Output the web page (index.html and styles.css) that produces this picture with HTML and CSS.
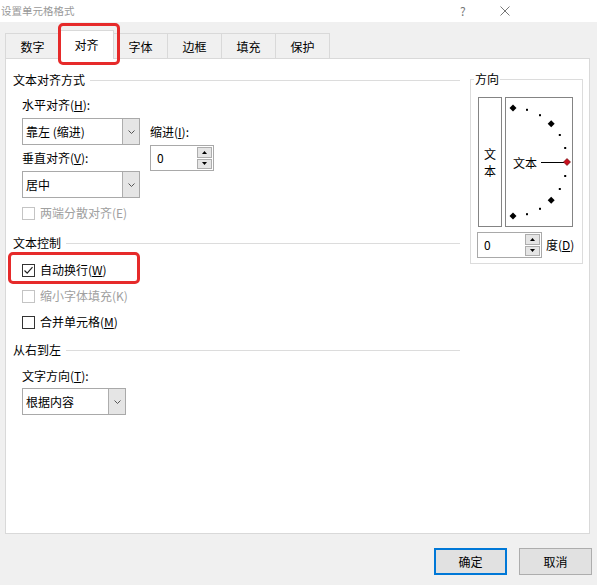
FILE: index.html
```html
<!DOCTYPE html>
<html lang="zh-CN">
<head>
<meta charset="utf-8">
<title>设置单元格格式</title>
<link rel="stylesheet" href="styles.css">
</head>
<body>
<div class="dialog">
  <div class="titlebar">
    <span class="title">设置单元格格式</span>
    <span class="help">?</span>
    <svg class="close" width="10" height="10" viewBox="0 0 10 10"><path d="M0.5 0.5L9.5 9.5M9.5 0.5L0.5 9.5" stroke="#777" stroke-width="1" fill="none"/></svg>
  </div>

  <div class="tabs">
    <div class="tab">数字</div>
    <div class="tab active">对齐</div>
    <div class="tab">字体</div>
    <div class="tab">边框</div>
    <div class="tab">填充</div>
    <div class="tab">保护</div>
  </div>

  <div class="panel">
    <div class="left">
      <div class="sec">文本对齐方式</div>
      <div class="align-grid">
        <div class="lbl-h">水平对齐(<u>H</u>):</div>
        <div class="combo combo-h"><span class="val">靠左 (缩进)</span><span class="arrow"><svg width="7" height="4" viewBox="0 0 7 4"><path d="M0.5 0.5L3.5 3.5L6.5 0.5" stroke="#555" fill="none"/></svg></span></div>
        <div class="lbl-indent">缩进(<u>I</u>):</div>
        <div class="lbl-v">垂直对齐(<u>V</u>):</div>
        <div class="spin spin-indent"><span class="val">0</span><span class="btns"><span><svg width="5" height="3" viewBox="0 0 5 3"><path d="M2.5 0L5 3H0Z" fill="#000"/></svg></span><span><svg width="5" height="3" viewBox="0 0 5 3"><path d="M0 0H5L2.5 3Z" fill="#000"/></svg></span></span></div>
        <div class="combo combo-v"><span class="val">居中</span><span class="arrow"><svg width="7" height="4" viewBox="0 0 7 4"><path d="M0.5 0.5L3.5 3.5L6.5 0.5" stroke="#555" fill="none"/></svg></span></div>
        <div class="chk disabled chk-dist"><span class="box"></span><span>两端分散对齐(E)</span></div>
      </div>

      <div class="sec sec-ctrl">文本控制</div>
      <div class="checks">
        <div class="chk"><span class="box"><svg width="11" height="11" viewBox="0 0 11 11"><path d="M1.5 5.5L4.2 8.2L9.5 2.2" stroke="#222" stroke-width="1.2" fill="none"/></svg></span><span>自动换行(<u>W</u>)</span></div>
        <div class="chk disabled"><span class="box"></span><span>缩小字体填充(K)</span></div>
        <div class="chk"><span class="box"></span><span>合并单元格(<u>M</u>)</span></div>
      </div>

      <div class="sec sec-rtl">从右到左</div>
      <div class="lbl-t">文字方向(<u>T</u>):</div>
      <div class="combo combo-t"><span class="val">根据内容</span><span class="arrow"><svg width="7" height="4" viewBox="0 0 7 4"><path d="M0.5 0.5L3.5 3.5L6.5 0.5" stroke="#555" fill="none"/></svg></span></div>
    </div>

    <div class="group">
      <span class="legend">方向</span>
      <div class="orient">
        <div class="vbox"><span>文</span><span>本</span></div>
        <div class="dial">
          <svg width="66" height="128" viewBox="0 0 66 128">
            <g fill="#000">
              <rect x="20" y="10.8" width="2" height="2"/>
              <rect x="33" y="16.2" width="2" height="2"/>
              <rect x="52.8" y="36" width="2" height="2"/>
              <rect x="58.2" y="49" width="2" height="2"/>
              <rect x="58.2" y="77" width="2" height="2"/>
              <rect x="52.8" y="90" width="2" height="2"/>
              <rect x="33" y="109.8" width="2" height="2"/>
              <rect x="20" y="115.2" width="2" height="2"/>
              <polygon points="7,6.5 10.5,10 7,13.5 3.5,10"/>
              <polygon points="45.2,22.3 48.7,25.8 45.2,29.3 41.7,25.8"/>
              <polygon points="45.2,98.7 48.7,102.2 45.2,105.7 41.7,102.2"/>
              <polygon points="7,114.5 10.5,118 7,121.5 3.5,118"/>
            </g>
            <text x="7" y="64" dominant-baseline="central" class="dial-text">文本</text>
            <line x1="35" y1="64.5" x2="58" y2="64.5" stroke="#000" stroke-width="1"/>
            <polygon points="61,60.5 64.5,64 61,67.5 57.5,64" fill="#c8101e" stroke="#5a0000" stroke-width="0.6"/>
          </svg>
        </div>
      </div>
      <div class="deg">
        <div class="spin spin-deg"><span class="val">0</span><span class="btns"><span><svg width="5" height="3" viewBox="0 0 5 3"><path d="M2.5 0L5 3H0Z" fill="#000"/></svg></span><span><svg width="5" height="3" viewBox="0 0 5 3"><path d="M0 0H5L2.5 3Z" fill="#000"/></svg></span></span></div>
        <span class="unit">度(<u>D</u>)</span>
      </div>
    </div>
  </div>

  <div class="buttons">
    <div class="btn default">确定</div>
    <div class="btn">取消</div>
  </div>

  <div class="mark mark-tab"></div>
  <div class="mark mark-wrap"></div>
</div>
</body>
</html>
```

FILE: styles.css
```css
* { box-sizing: border-box; }
html, body { margin: 0; padding: 0; }
body {
  background: #f0f0f0;
  font-family: "Noto Sans CJK SC", "Noto Sans", sans-serif;
  font-size: 12px;
  line-height: 16px;
  color: #000;
}
u { text-underline-offset: 1px; }

.dialog { position: relative; width: 597px; height: 585px; overflow: hidden; }

.titlebar {
  height: 22px;
  background: #fff;
  display: flex;
  align-items: center;
  padding-left: 1px;
  color: #999;
}
.title { flex: 1; font-size: 10.5px; }
.help { width: 10px; margin-right: 30px; color: #777; font-size: 12px; }
.close { display: block; margin-right: 87px; }

.tabs {
  display: flex;
  align-items: flex-end;
  height: 36px;
  padding-left: 5px;
}
.tab {
  width: 55px;
  height: 25px;
  margin-right: -1px;
  border: 1px solid #d9d9d9;
  border-bottom: 0;
  background: #f0f0f0;
  display: flex;
  align-items: center;
  justify-content: center;
  padding-top: 2px;
}
.tab.active {
  background: #fff;
  height: 29px;
  margin-bottom: -1px;
  padding-top: 0;
  position: relative;
  z-index: 1;
}

.panel {
  margin: 0 7px 0 5px;
  height: 476px;
  background: #fff;
  border: 1px solid #d9d9d9;
  display: flex;
  align-items: flex-start;
  gap: 10px;
  padding: 13px 6px 0 7px;
}
.left { width: 447px; }

.sec { display: flex; align-items: center; gap: 5px; height: 16px; }
.sec::after { content: ""; flex: 1; border-top: 1px solid #dcdcdc; }
.sec-ctrl { margin-top: 14px; }
.sec-rtl { margin-top: 7px; }

.align-grid {
  display: grid;
  grid-template-columns: 118px 64px;
  grid-template-rows: 30px 27px 26px 27px auto;
  column-gap: 10px;
  margin-left: 9px;
}
.lbl-h { grid-row: 1; grid-column: 1; align-self: end; margin-bottom: 5px; }
.combo-h { grid-row: 2; grid-column: 1; }
.lbl-indent { grid-row: 2; grid-column: 2; align-self: center; }
.lbl-v { grid-row: 3; grid-column: 1; align-self: center; }
.spin-indent { grid-row: 3; grid-column: 2; }
.combo-v { grid-row: 4; grid-column: 1; }
.chk-dist { grid-row: 5; grid-column: 1 / span 2; margin-top: 7px; height: 16px; }

.combo {
  display: flex;
  height: 27px;
  border: 1px solid #a9a9a9;
  background: #fff;
}
.combo .val { flex: 1; display: flex; align-items: center; padding-left: 3px; }
.combo .arrow {
  width: 17px;
  background: #e5e5e5;
  border-left: 1px solid #adadad;
  display: flex;
  align-items: center;
  justify-content: center;
}
.combo-t { width: 104px; margin-left: 9px; margin-top: 4px; }

.spin {
  display: flex;
  align-items: center;
  height: 26px;
  border: 1px solid #a9a9a9;
  background: #fff;
  padding: 1px 1px 1px 0;
}
.spin .val { flex: 1; padding-left: 6px; }
.spin .btns { display: flex; flex-direction: column; gap: 1px; width: 15px; height: 22px; }
.spin .btns span {
  flex: 1;
  background: #e5e5e5;
  border: 1px solid #adadad;
  display: flex;
  align-items: center;
  justify-content: center;
}
.spin .btns svg { display: block; }

.chk { display: flex; align-items: center; gap: 5px; }
.chk .box {
  width: 13px;
  height: 13px;
  border: 1px solid #333;
  background: #fff;
  display: flex;
  align-items: center;
  justify-content: center;
}
.chk.disabled { color: #a0a0a0; }
.chk.disabled .box { border-color: #c4c4c4; }

.checks { margin-top: 6px; margin-left: 9px; }
.checks .chk { height: 26px; }

.lbl-t { margin-top: 10px; margin-left: 9px; }

.group {
  position: relative;
  width: 113px;
  height: 185px;
  margin-top: 7px;
  border: 1px solid #dcdcdc;
  padding: 17px 0 0 7px;
}
.legend {
  position: absolute;
  top: -9px;
  left: 3px;
  padding: 0 1px;
  background: #fff;
}
.orient { display: grid; grid-template-columns: 24px 68px; column-gap: 3px; }
.vbox {
  height: 130px;
  border: 1px solid #848484;
  display: flex;
  flex-direction: column;
  align-items: center;
  justify-content: center;
  line-height: 17px;
}
.dial { height: 130px; border: 1px solid #848484; }
.dial svg { display: block; }
.dial-text { font-family: "Noto Sans CJK SC", sans-serif; font-size: 12px; fill: #000; }

.deg { display: flex; align-items: center; margin-top: 5px; margin-left: -1px; }
.spin-deg { width: 65px; }
.unit { margin-left: 4px; }

.buttons {
  display: flex;
  justify-content: flex-end;
  gap: 12px;
  margin-top: 14px;
  padding-right: 5px;
}
.btn {
  width: 73px;
  height: 27px;
  background: #e1e1e1;
  border: 1px solid #adadad;
  display: flex;
  align-items: center;
  justify-content: center;
}
.btn.default { border-color: #0078d7; box-shadow: inset 0 0 0 1px #0078d7; }

.mark {
  position: absolute;
  border: 3px solid #e62a2a;
  border-radius: 5px;
  z-index: 2;
}
.mark-tab { left: 58px; top: 23px; width: 62px; height: 42px; }
.mark-wrap { left: 8px; top: 252px; width: 132px; height: 32px; }
```
